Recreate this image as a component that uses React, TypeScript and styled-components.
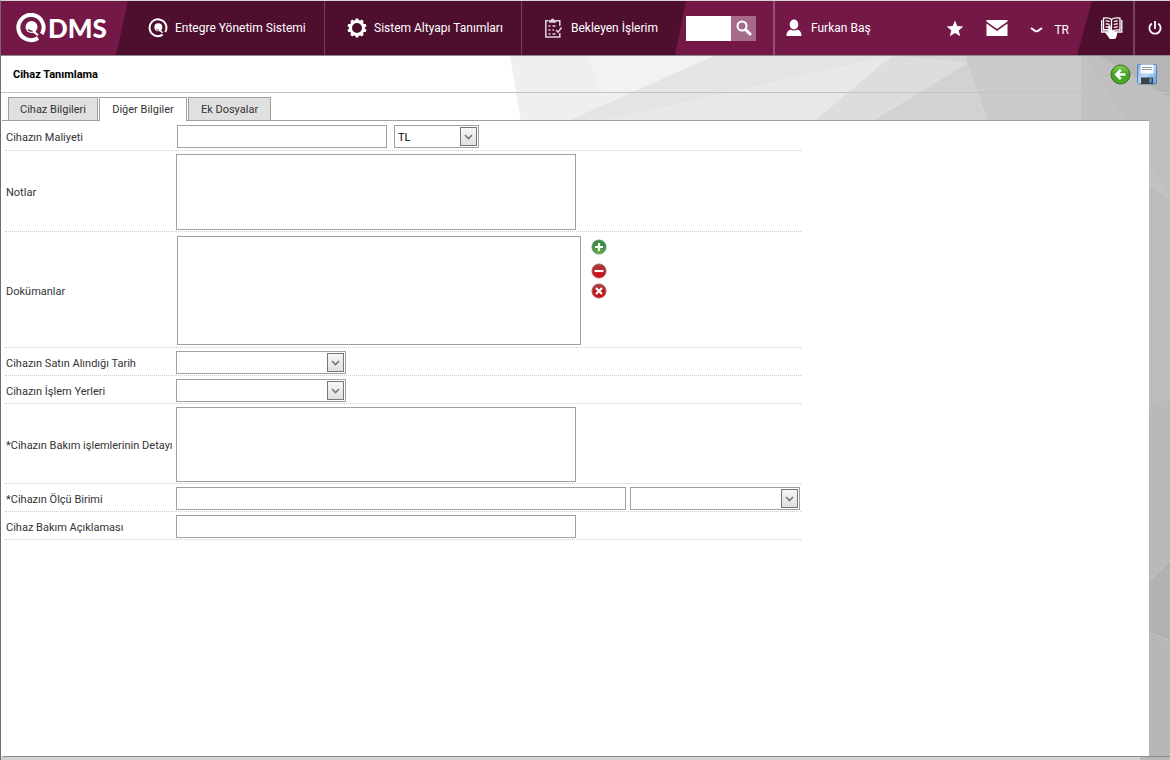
import React, { useState } from "react";
import styled, { createGlobalStyle } from "styled-components";

const GlobalStyle = createGlobalStyle`
  *, *::before, *::after { box-sizing: border-box; }
  body { margin: 0; background: #fff; }
  body, button, input, select, textarea {
    font-family: Roboto, "Noto Sans", sans-serif;
    font-size: 11px;
    color: #333;
  }
  button { border: 0; padding: 0; background: none; cursor: pointer; }
  svg { display: block; flex: none; }
`;

const Page = styled.div`
  position: relative;
  display: flex;
  flex-direction: column;
  min-height: 100vh;
  border-top: 1px solid #d5d5d5;
  border-left: 1px solid #6e6e6e;
  overflow: hidden;
`;

const Backdrop = styled.svg`
  position: absolute;
  inset: 0;
  width: 100%;
  height: 100%;
  z-index: -1;
`;

const Header = styled.header`
  display: flex;
  height: 55px;
  background: #741848;
  border-bottom: 1px solid #8c8c8c;
  font-size: 12px;
  color: #fff;
`;

const Logo = styled.a`
  display: flex;
  align-items: center;
  gap: 2px;
  width: 115px;
  padding-left: 15px;
  color: #fff;
  text-decoration: none;
  font-family: Lato, sans-serif;
  font-weight: 900;
  font-size: 26px;
`;

const Nav = styled.nav`
  display: flex;
  width: 570px;
  padding-left: 10px;
  background: #4e0f2f;
  clip-path: polygon(12px 0, 100% 0, calc(100% - 11px) 100%, 0 100%);
`;

const NavLink = styled.a<{ $width: number }>`
  display: flex;
  align-items: center;
  gap: 7px;
  width: ${(p) => p.$width}px;
  padding-left: 22px;
  border-right: 1px solid #74405a;
  color: #fff;
  text-decoration: none;
  white-space: nowrap;
  &:last-child { border-right: 0; }
`;

const Search = styled.form`
  display: flex;
  align-items: center;
  width: 89px;
  border-right: 2px solid #954d75;
`;

const SearchInput = styled.input`
  width: 45px;
  height: 25px;
  border: 0;
  padding: 0 4px;
  background: #fff;
`;

const SearchButton = styled.button`
  display: grid;
  place-items: center;
  width: 25px;
  height: 25px;
  background: #a66b8a;
`;

const User = styled.a`
  display: flex;
  align-items: center;
  gap: 8px;
  padding-left: 10px;
  color: #fff;
  text-decoration: none;
`;

const Shortcuts = styled.div`
  display: flex;
  align-items: center;
  gap: 22px;
  margin-left: auto;
  padding-right: 8px;
`;

const Language = styled.button`
  display: flex;
  align-items: center;
  gap: 11px;
  padding-top: 4px;
  color: #fff;
  font-size: 12px;
`;

const Tools = styled.div`
  display: flex;
  width: 93px;
  background: #4e0f2f;
  clip-path: polygon(15px 0, 100% 0, 100% 100%, 0 100%);
`;

const ToolButton = styled.button<{ $width: number }>`
  display: flex;
  align-items: center;
  justify-content: flex-end;
  width: ${(p) => p.$width}px;
  padding-right: 10px;
  & + & { border-left: 2px solid #74405a; padding-right: 8px; }
`;

const TitleBar = styled.div`
  display: flex;
  align-items: center;
  justify-content: space-between;
  height: 37px;
  padding: 0 13px 0 12px;
  border-bottom: 1px solid #c3c3c3;
`;

const Title = styled.h1`
  margin: 0;
  font-size: 11px;
  font-weight: 700;
  color: #000;
`;

const Actions = styled.div`
  display: flex;
  align-items: center;
  gap: 6px;
`;

const Tabs = styled.div`
  display: flex;
  gap: 1px;
  padding: 4px 0 0 7px;
`;

const Tab = styled.button<{ $active: boolean; $width: number }>`
  position: relative;
  z-index: 1;
  width: ${(p) => p.$width}px;
  height: ${(p) => (p.$active ? 24 : 23)}px;
  margin-bottom: ${(p) => (p.$active ? -1 : 0)}px;
  border: 1px solid #a0a0a0;
  border-bottom: 0;
  background: ${(p) => (p.$active ? "#fff" : "#e0e0e0")};
  white-space: nowrap;
`;

const PanelFrame = styled.div`
  display: flex;
  flex: 1;
  margin: 0 0 3px 1px;
  padding-right: 21px;
  border-bottom: 1px solid #8c8c8c;
`;

const Panel = styled.main`
  flex: 1;
  padding-left: 3px;
  border-top: 1px solid #a0a0a0;
  background: #fff;
`;

const Row = styled.div`
  display: grid;
  grid-template-columns: 168px minmax(0, 626px);
  gap: 2px;
`;

const LabelCell = styled.label`
  display: flex;
  align-items: center;
  padding: 3px 0 0 1px;
  border-bottom: 1px dotted #cccccc;
  white-space: nowrap;
`;

const FieldCell = styled.div<{ $pad?: string; $gap?: number }>`
  display: flex;
  align-items: flex-start;
  gap: ${(p) => p.$gap ?? 4}px;
  padding: ${(p) => p.$pad ?? "3px 1px 1px"};
  border-bottom: 1px dotted #cccccc;
`;

const TextInput = styled.input<{ $width: number }>`
  width: ${(p) => p.$width}px;
  height: 23px;
  padding: 0 3px;
  border: 1px solid #a0a0a0;
  background: #fff;
`;

const TextArea = styled.textarea<{ $height: number }>`
  width: 400px;
  height: ${(p) => p.$height}px;
  border: 1px solid #a0a0a0;
  background: #fff;
  resize: none;
`;

const DocumentList = styled.select`
  width: 404px;
  height: 109px;
  border: 1px solid #a0a0a0;
  border-radius: 0;
  background: #fff;
`;

const DocumentActions = styled.div`
  display: grid;
  grid-template-rows: 24px 20px 20px;
  align-items: start;
  padding-top: 3px;
`;

const SelectBox = styled.span<{ $width: number }>`
  position: relative;
  display: flex;
  width: ${(p) => p.$width}px;
  height: 23px;
`;

const NativeSelect = styled.select`
  appearance: none;
  width: 100%;
  padding: 2px 20px 0 3px;
  border: 1px solid #a0a0a0;
  border-radius: 0;
  background: #fff;
  color: #000;
`;

const Arrow = styled.span`
  position: absolute;
  top: 2px;
  right: 2px;
  bottom: 2px;
  display: grid;
  place-items: center;
  width: 17px;
  border: 1px solid #767676;
  background: linear-gradient(#f6f6f6, #e0e0e0);
  pointer-events: none;
`;

function Select({ id, width, options, label }: { id: string; width: number; options: string[]; label?: string }) {
  return (
    <SelectBox $width={width}>
      <NativeSelect id={id} aria-label={label}>
        {options.map((o) => (
          <option key={o}>{o}</option>
        ))}
      </NativeSelect>
      <Arrow>
        <svg width="9" height="6" viewBox="0 0 9 6" fill="none" stroke="#777" strokeWidth="1.6">
          <path d="M1 1l3.5 3.5L8 1" />
        </svg>
      </Arrow>
    </SelectBox>
  );
}

function QMark({ size, ring }: { size: number; ring: number }) {
  return (
    <svg width={size} height={size} viewBox="0 0 30 30" fill="none" stroke="#fff">
      <path d="M22 25A12.600 12.600 0 1 1 25.800 21" strokeWidth={ring} />
      <circle cx="15.500" cy="14" r="6" fill="#fff" stroke="none" />
      <path d="M12 16.500c1.200 1.300 2.800 1.900 4.600 1.600" stroke="#5d1239" strokeWidth="1.300" />
      <path d="M17 18.500c2 .8 3.500 2.300 5 3.700" strokeWidth="2" />
    </svg>
  );
}

const GEAR_TEETH = [0, 36, 72, 108, 144, 180, 216, 252, 288, 324];

function GearIcon() {
  return (
    <svg width="20" height="20" viewBox="-10 -10 20 20">
      <circle r="6.500" fill="none" stroke="#fff" strokeWidth="3" />
      {GEAR_TEETH.map((a) => (
        <path key={a} d="M-2 -7L-1.200 -9.600H1.200L2 -7z" fill="#fff" transform={`rotate(${a})`} />
      ))}
    </svg>
  );
}

function ChecklistIcon() {
  return (
    <svg width="20" height="20" viewBox="0 0 20 20" fill="none" stroke="#e2d3da" strokeWidth="1.500">
      <path d="M4.500 2.800H1.800v16.200h14V15M12 2.800h3.800V8" />
      <path d="M5.500 4.200V2.400h1.600C7.300.6 9.900.6 10.100 2.400h1.600v1.800z" fill="#e2d3da" strokeWidth="1" />
      <path d="M4.500 8h2M4.500 12h2M4.500 16h2M8.500 8h3M8.500 12h1.500M8.500 16h3" strokeWidth="1.600" />
      <path d="M12 12l2 2.200 3.600-4.700" />
    </svg>
  );
}

function BookIcon() {
  return (
    <svg width="22" height="23" viewBox="0 0 22 23" fill="none" stroke="#fff">
      <path d="M10.500 2.500C8.500.8 5.500.7 2.500 1.200V13c3-.5 6-.2 8 1.500 2-1.700 5-2 8.500-1.500V1.200C15.500.7 12.500.8 10.500 2.500z" strokeWidth="1.300" />
      <path d="M10.500 2.500V14.500M.7 3v12h7M20.800 3v12h-6" strokeWidth="1.300" />
      <path d="M4.500 4c1.500-.2 3 0 4.200.6M4.500 7c1.500-.2 3 0 4.200.6M4.500 10c1.500-.2 3 0 4.200.6M17 4c-1.500-.2-3 0-4.200.6M17 7c-1.500-.2-3 0-4.200.6M17 10c-1.500-.2-3 0-4.200.6" strokeWidth="1.100" />
      <path d="M7.300 9.500c0-1.800 2.400-1.800 2.400 0v4l5 1c1.300.3 1.700 1.200 1.500 2.300l-1 3.500c-.3 1-.8 1.700-1.800 1.700H9.800c-1 0-1.500-.7-2-1.600L4.500 16c-.5-1.200 1-1.800 1.800-.9l1 1z" fill="#fff" stroke="none" />
    </svg>
  );
}

function BackIcon() {
  return (
    <svg width="21" height="21" viewBox="0 0 21 21">
      <defs>
        <linearGradient id="back" x1="0" y1="0" x2="0" y2="1">
          <stop offset="0" stopColor="#8fd356" />
          <stop offset=".5" stopColor="#3f9f22" />
          <stop offset="1" stopColor="#4cae2a" />
        </linearGradient>
      </defs>
      <circle cx="10.500" cy="10.500" r="9.500" fill="url(#back)" stroke="#2f6f1c" />
      <path d="M15.500 10.500H7M10.800 5.800L6.200 10.500l4.600 4.700" fill="none" stroke="#fff" strokeWidth="2.600" />
    </svg>
  );
}

function SaveIcon() {
  return (
    <svg width="20" height="21" viewBox="0 0 20 21">
      <defs>
        <linearGradient id="save" x1="0" y1="0" x2="1" y2="1">
          <stop offset="0" stopColor="#7fb2e8" />
          <stop offset=".5" stopColor="#b5d8f6" />
          <stop offset="1" stopColor="#5c9ad8" />
        </linearGradient>
      </defs>
      <path d="M1 .5h18l.5.500v18.500l-.5.500H2L.5 18.500V1z" fill="url(#save)" stroke="#5585b8" />
      <path d="M3.500.500h13v9h-13z" fill="#f7f9fb" />
      <path d="M5 3.500h10M5 5.500h10" stroke="#9c9c9c" />
      <path d="M4 13.500h12v6.500H4z" fill="#3d4248" />
      <path d="M12.500 14.500h2v4h-2z" fill="#6fa8df" />
    </svg>
  );
}

const RoundIcon = ({ tone, path }: { tone: "green" | "red"; path: string }) => (
  <svg width="16" height="16" viewBox="0 0 16 16">
    <defs>
      <linearGradient id={`round-${tone}`} x1="0" y1="0" x2="0" y2="1">
        <stop offset="0" stopColor={tone === "green" ? "#3f8a45" : "#a8474a"} />
        <stop offset=".5" stopColor={tone === "green" ? "#3c9040" : "#b91a20"} />
        <stop offset="1" stopColor={tone === "green" ? "#6fb548" : "#d80f14"} />
      </linearGradient>
    </defs>
    <circle cx="8" cy="8" r="7" fill={`url(#round-${tone})`} stroke={tone === "green" ? "#5c8f60" : "#a85a5c"} />
    <path d={path} stroke="#fff" strokeWidth="2.200" fill="none" />
  </svg>
);

const FACETS: [string, string][] = [
  ["510,56 714,56 567,121 521,121", "#efefef"],
  ["588,56 714,56 640,89 601,96", "#f2f2f2"],
  ["714,56 891,56 605,121 567,121", "#e4e4e4"],
  ["891,56 814,121 605,121", "#e8e8e8"],
  ["891,56 967,63 872,121 814,121", "#dddddd"],
  ["967,63 987,121 872,121", "#d2d2d2"],
  ["891,56 967,56 967,63", "#d6d6d6"],
  ["967,56 1081,56 1083,121 987,121 967,63", "#cbcbcb"],
  ["1081,56 1170,56 1170,400 1083,400", "#c2c2c2"],
  ["1085,56 1100,56 1170,98 1170,200 1127,121", "#bfbfbf"],
  ["1100,56 1170,56 1170,98", "#b5b5b5"],
  ["1140,180 1170,200 1170,400 1140,417", "#bcbcbc"],
  ["1140,417 1170,396 1170,560 1140,590", "#b9b9b9"],
  ["1140,590 1170,560 1170,641 1140,628", "#b2b2b2"],
  ["1140,628 1170,641 1170,760 1140,760", "#b7b7b7"],
  ["0,757 1140,757 1140,760 0,760", "#d4d4d4"],
];

const TABS = [
  { name: "Cihaz Bilgileri", width: 90 },
  { name: "Diğer Bilgiler", width: 88 },
  { name: "Ek Dosyalar", width: 83 },
];

export default function App() {
  const [active, setActive] = useState(1);
  return (
    <Page>
      <GlobalStyle />
      <Backdrop viewBox="1 1 1169 759" preserveAspectRatio="none" aria-hidden="true">
        {FACETS.map(([points, fill]) => (
          <polygon key={points} points={points} fill={fill} />
        ))}
      </Backdrop>

      <Header>
        <Logo href="#">
          <QMark size={30} ring={4} />
          DMS
        </Logo>
        <Nav>
          <NavLink href="#" $width={199}>
            <QMark size={20} ring={3} />
            Entegre Yönetim Sistemi
          </NavLink>
          <NavLink href="#" $width={197}>
            <GearIcon />
            Sistem Altyapı Tanımları
          </NavLink>
          <NavLink href="#" $width={160}>
            <ChecklistIcon />
            Bekleyen İşlerim
          </NavLink>
        </Nav>
        <Search onSubmit={(e) => e.preventDefault()}>
          <SearchInput aria-label="Ara" />
          <SearchButton aria-label="Ara">
            <svg width="16" height="16" viewBox="0 0 16 16" fill="none" stroke="#fff">
              <circle cx="6" cy="6" r="4.500" strokeWidth="2" />
              <path d="M9.500 9.500l4.500 4.500" strokeWidth="3" strokeLinecap="round" />
            </svg>
          </SearchButton>
        </Search>
        <User href="#">
          <svg width="18" height="18" viewBox="0 0 18 18" fill="#fff">
            <ellipse cx="9" cy="5.500" rx="4.300" ry="5" />
            <path d="M1.500 17c0-4 1.500-5.500 4-6.500 2 1.300 5 1.300 7 0 2.500 1 4 2.500 4 6.500z" />
          </svg>
          Furkan Baş
        </User>
        <Shortcuts>
          <button aria-label="Favoriler">
            <svg width="18" height="17" viewBox="0 0 18 17" fill="#fff">
              <path d="M9 .5l2.300 5.600 6 .4-4.600 3.900 1.500 5.900L9 13.100l-5.200 3.200 1.500-5.900L.7 6.500l6-.4z" />
            </svg>
          </button>
          <button aria-label="Mesajlar">
            <svg width="22" height="16" viewBox="0 0 22 16" fill="#fff">
              <path d="M.5 0h21v1.500L11 9 .5 1.500z" />
              <path d="M.5 3.500L11 11l10.500-7.500V16H.5z" />
            </svg>
          </button>
          <Language>
            <svg width="13" height="6" viewBox="0 0 13 6" fill="none" stroke="#fff" strokeWidth="2">
              <path d="M1 1l4 2.800q1.500.8 3 0L12 1" />
            </svg>
            TR
          </Language>
        </Shortcuts>
        <Tools>
          <ToolButton $width={56} aria-label="Yardım">
            <BookIcon />
          </ToolButton>
          <ToolButton $width={37} aria-label="Çıkış">
            <svg width="14" height="16" viewBox="0 0 14 16" fill="none" stroke="#fff" strokeWidth="1.800">
              <path d="M7 1v8M3.800 3.500a5.600 5.600 0 1 0 6.400 0" />
            </svg>
          </ToolButton>
        </Tools>
      </Header>

      <TitleBar>
        <Title>Cihaz Tanımlama</Title>
        <Actions>
          <button aria-label="Geri">
            <BackIcon />
          </button>
          <button aria-label="Kaydet">
            <SaveIcon />
          </button>
        </Actions>
      </TitleBar>

      <Tabs role="tablist">
        {TABS.map((tab, i) => (
          <Tab
            key={tab.name}
            role="tab"
            aria-selected={i === active}
            $active={i === active}
            $width={tab.width}
            onClick={() => setActive(i)}
          >
            {tab.name}
          </Tab>
        ))}
      </Tabs>

      <PanelFrame>
        <Panel>
          <Row>
            <LabelCell htmlFor="cost">Cihazın Maliyeti</LabelCell>
            <FieldCell $pad="4px 2px 2px" $gap={7}>
              <TextInput id="cost" $width={210} />
              <Select id="currency" label="Para birimi" width={85} options={["TL"]} />
            </FieldCell>
          </Row>
          <Row>
            <LabelCell htmlFor="notes">Notlar</LabelCell>
            <FieldCell>
              <TextArea id="notes" $height={76} />
            </FieldCell>
          </Row>
          <Row>
            <LabelCell htmlFor="documents">Dokümanlar</LabelCell>
            <FieldCell $pad="4px 2px 2px" $gap={10}>
              <DocumentList id="documents" multiple />
              <DocumentActions>
                <button aria-label="Ekle">
                  <RoundIcon tone="green" path="M8 4v8M4 8h8" />
                </button>
                <button aria-label="Çıkar">
                  <RoundIcon tone="red" path="M3.500 8h9" />
                </button>
                <button aria-label="Sil">
                  <RoundIcon tone="red" path="M5 5l6 6M11 5l-6 6" />
                </button>
              </DocumentActions>
            </FieldCell>
          </Row>
          <Row>
            <LabelCell htmlFor="purchased">Cihazın Satın Alındığı Tarih</LabelCell>
            <FieldCell>
              <Select id="purchased" width={170} options={[""]} />
            </FieldCell>
          </Row>
          <Row>
            <LabelCell htmlFor="places">Cihazın İşlem Yerleri</LabelCell>
            <FieldCell>
              <Select id="places" width={170} options={[""]} />
            </FieldCell>
          </Row>
          <Row>
            <LabelCell htmlFor="maintenance">*Cihazın Bakım işlemlerinin Detayı</LabelCell>
            <FieldCell>
              <TextArea id="maintenance" $height={75} />
            </FieldCell>
          </Row>
          <Row>
            <LabelCell htmlFor="unit">*Cihazın Ölçü Birimi</LabelCell>
            <FieldCell>
              <TextInput id="unit" $width={450} />
              <Select id="unitType" label="Birim" width={170} options={[""]} />
            </FieldCell>
          </Row>
          <Row>
            <LabelCell htmlFor="note">Cihaz Bakım Açıklaması</LabelCell>
            <FieldCell>
              <TextInput id="note" $width={400} />
            </FieldCell>
          </Row>
        </Panel>
      </PanelFrame>
    </Page>
  );
}
